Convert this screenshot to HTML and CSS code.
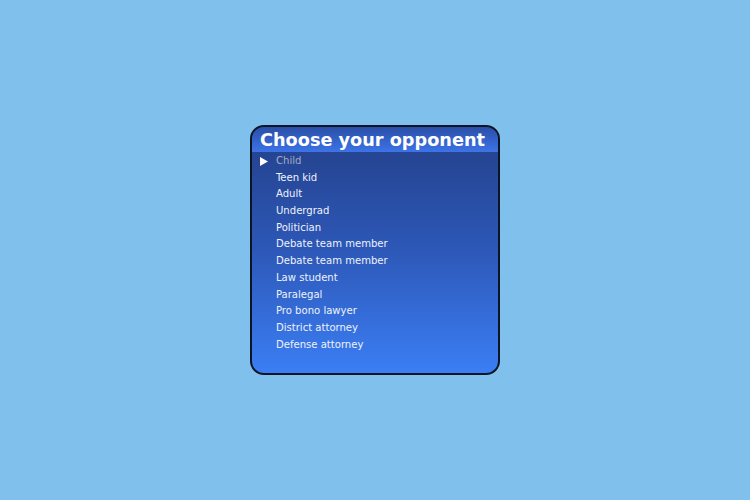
FILE: index.html
```html
<!DOCTYPE html>
<html>
<head>
<meta charset="utf-8">
<link rel="stylesheet" href="styles.css">
</head>
<body>
<div class="stage">
  <div class="panel">
    <div class="header">Choose your opponent</div>
    <ul class="list">
      <li class="item selected"><svg class="arrow" width="8" height="9" viewBox="0 0 8 9"><polygon points="0,0 8,4.5 0,9" fill="#ffffff"/></svg>Child</li>
      <li class="item">Teen kid</li>
      <li class="item">Adult</li>
      <li class="item">Undergrad</li>
      <li class="item">Politician</li>
      <li class="item">Debate team member</li>
      <li class="item">Debate team member</li>
      <li class="item">Law student</li>
      <li class="item">Paralegal</li>
      <li class="item">Pro bono lawyer</li>
      <li class="item">District attorney</li>
      <li class="item">Defense attorney</li>
    </ul>
  </div>
</div>
</body>
</html>
```
FILE: styles.css
```css
html, body {
  margin: 0;
  padding: 0;
}
body {
  background: #7fc1ec;
  width: 750px;
  height: 500px;
}
.stage {
  width: 750px;
  height: 500px;
  display: flex;
  align-items: center;
  justify-content: center;
}
.panel {
  box-sizing: border-box;
  width: 250px;
  height: 250px;
  border: 2px solid #0d1424;
  border-radius: 14px;
  overflow: hidden;
  background: linear-gradient(to bottom, #233f88 0%, #2d58b8 50%, #3b7ef4 100%);
  font-family: "DejaVu Sans Condensed", "DejaVu Sans", sans-serif;
}
.header {
  height: 25px;
  background: linear-gradient(to bottom, #2a4ea6 0%, #3565cf 60%, #3d74e6 100%);
  color: #ffffff;
  font-family: "DejaVu Sans", sans-serif;
  font-weight: bold;
  font-size: 17.7px;
  line-height: 26px;
  padding-left: 8px;
  white-space: nowrap;
}
.list {
  list-style: none;
  margin: 0;
  padding: 1px 0 0 24px;
}
.item {
  height: 16.7px;
  line-height: 16.7px;
  font-size: 11.2px;
  color: #eef2fb;
  position: relative;
  white-space: nowrap;
}
.item.selected {
  color: #a3abc2;
}
.arrow {
  position: absolute;
  left: -16px;
  top: 4px;
}
```
